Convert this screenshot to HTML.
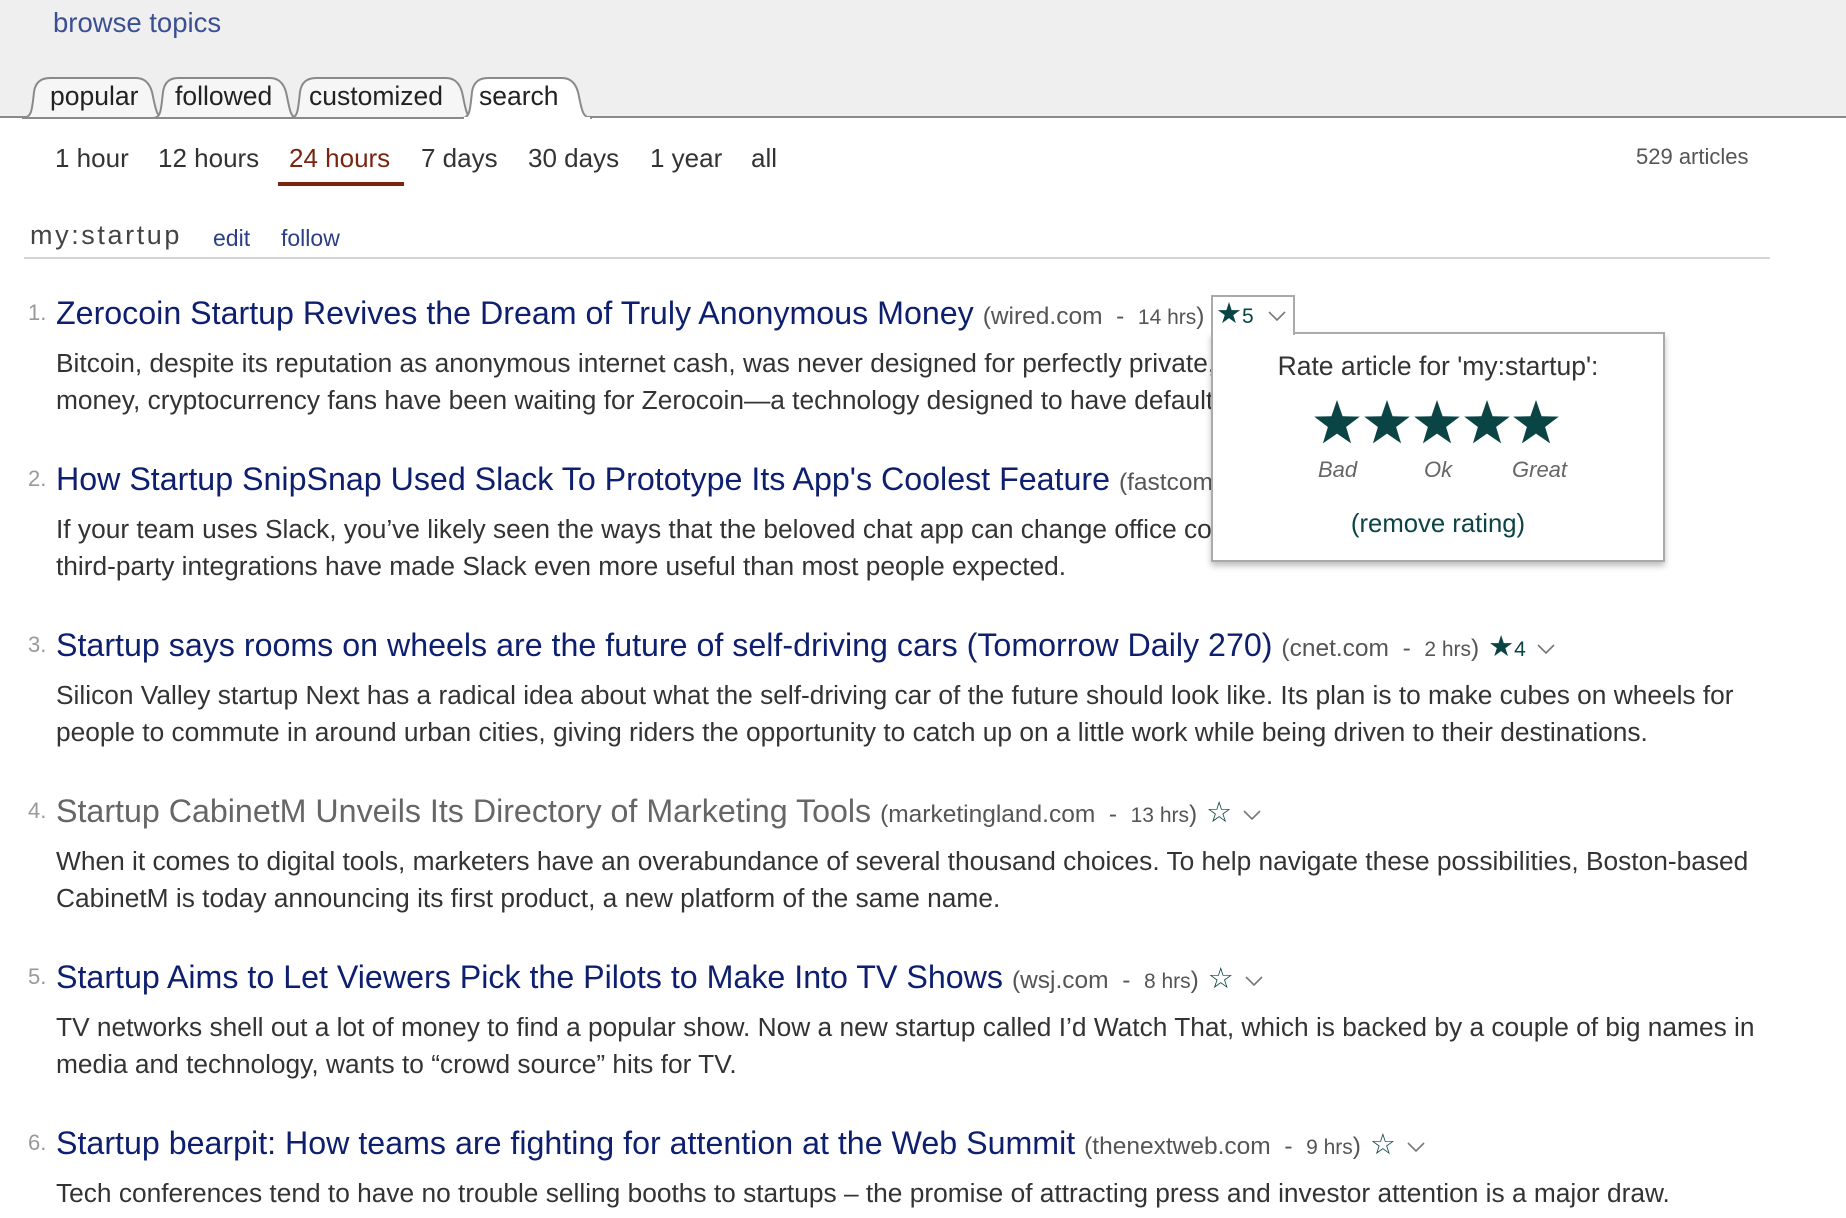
<!DOCTYPE html>
<html><head><meta charset="utf-8"><style>
html,body{margin:0;padding:0}
body{width:1846px;height:1218px;position:relative;overflow:hidden;background:#fff;font-family:"Liberation Sans",Arial,sans-serif;color:#333}
.top{position:absolute;left:0;top:0;width:1846px;height:118px;background:#efefef;border-bottom:2px solid #8a8a8a;box-sizing:border-box}
.a{position:absolute;white-space:nowrap}
.tf{font-size:26px;color:#333;top:143px}
.item{position:absolute;left:0;width:1846px}
.num{position:absolute;left:28px;top:5px;font-size:22px;color:#999}
.ttl{position:absolute;left:56px;top:0;white-space:nowrap;font-size:32.2px;line-height:36px;color:#0d1f6e}
.ttl.v{color:#666}
.meta{font-size:24.5px;color:#555}
.meta small{font-size:21px}
.st{color:#0b4444;font-size:29px}
.rn{color:#0b4444;font-size:21px}
.body{position:absolute;left:56px;top:50px;font-size:26.3px;line-height:36.5px;color:#333;white-space:nowrap}
</style></head><body>
<div class="top"></div>
<div class="a" style="left:53px;top:7px;font-size:27.5px;color:#3b4f93">browse topics</div>
<svg class="a" style="left:0;top:70px" width="620" height="50">
<g stroke="#8a8a8a" stroke-width="2">
<path d="M22,48 C32,48 32,40 34,22 Q36,8 50,8 L136,8 Q148,8 152,22 C156,40 156,48 166,48 Z" fill="#f6f6f6"/>
<path d="M153,48 C161,48 161,40 163,22 Q165,8 178,8 L270,8 Q282,8 286,22 C290,40 290,48 298,48 Z" fill="#f6f6f6"/>
<path d="M290,48 C298,48 298,40 300,22 Q302,8 316,8 L446,8 Q458,8 462,22 C466,40 466,48 474,48 Z" fill="#f6f6f6"/>
<path d="M462,48 C470,48 470,40 472,22 Q474,8 488,8 L562,8 Q574,8 578,22 C582,40 582,48 592,48" fill="#fff"/>
</g>
<rect x="464" y="47" width="126" height="4" fill="#fff"/>
</svg>
<div class="a" style="left:50px;top:81px;font-size:26.5px;color:#222">popular</div>
<div class="a" style="left:175px;top:81px;font-size:26.5px;color:#222">followed</div>
<div class="a" style="left:309px;top:81px;font-size:26.5px;color:#222">customized</div>
<div class="a" style="left:479px;top:81px;font-size:26.5px;color:#222">search</div>

<div class="a tf" style="left:55px">1 hour</div>
<div class="a tf" style="left:158px">12 hours</div>
<div class="a tf" style="left:289px;color:#7a2510">24 hours</div>
<div class="a" style="left:278px;top:182px;width:126px;height:4px;background:#7a2510"></div>
<div class="a tf" style="left:421px">7 days</div>
<div class="a tf" style="left:528px">30 days</div>
<div class="a tf" style="left:650px">1 year</div>
<div class="a tf" style="left:751px">all</div>
<div class="a" style="left:1636px;top:144px;font-size:22px;color:#555">529 articles</div>

<div class="a" style="left:30px;top:220px;font-size:27px;color:#444;letter-spacing:2.6px">my:startup</div>
<div class="a" style="left:213px;top:225px;font-size:23px;color:#2b3f85">edit</div>
<div class="a" style="left:281px;top:225px;font-size:23px;color:#2b3f85">follow</div>
<div class="a" style="left:24px;top:257px;width:1746px;height:2px;background:#d4d4d4"></div>

<div class="item" style="top:295px">
<div class="num">1.</div>
<div class="ttl">Zerocoin Startup Revives the Dream of Truly Anonymous Money <span class="meta">(wired.com &nbsp;- &nbsp;<small>14 hrs</small>)</span></div>
<div class="body">Bitcoin, despite its reputation as anonymous internet cash, was never designed for perfectly private, untraceable<br>money, cryptocurrency fans have been waiting for Zerocoin—a technology designed to have default anonymity.</div>
</div>
<div class="item" style="top:461px">
<div class="num">2.</div>
<div class="ttl">How Startup SnipSnap Used Slack To Prototype Its App's Coolest Feature <span class="meta">(fastcompany.com &nbsp;- &nbsp;<small>8 hrs</small>)</span></div>
<div class="body">If your team uses Slack, you’ve likely seen the ways that the beloved chat app can change office communication. Its bots and<br>third-party integrations have made Slack even more useful than most people expected.</div>
</div>
<div class="item" style="top:627px">
<div class="num">3.</div>
<div class="ttl">Startup says rooms on wheels are the future of self-driving cars (Tomorrow Daily 270) <span class="meta">(cnet.com &nbsp;- &nbsp;<small>2 hrs</small>)</span> <span class="st">★</span><span class="rn">4</span> <svg width="22" height="14" viewBox="0 0 22 14"><path d="M3,3 L11,11 L19,3" fill="none" stroke="#777" stroke-width="1.6"/></svg></div>
<div class="body">Silicon Valley startup Next has a radical idea about what the self-driving car of the future should look like. Its plan is to make cubes on wheels for<br>people to commute in around urban cities, giving riders the opportunity to catch up on a little work while being driven to their destinations.</div>
</div>
<div class="item" style="top:793px">
<div class="num">4.</div>
<div class="ttl v">Startup CabinetM Unveils Its Directory of Marketing Tools <span class="meta">(marketingland.com &nbsp;- &nbsp;<small>13 hrs</small>)</span> <span class="st">☆</span> <svg width="22" height="14" viewBox="0 0 22 14"><path d="M3,3 L11,11 L19,3" fill="none" stroke="#777" stroke-width="1.6"/></svg></div>
<div class="body">When it comes to digital tools, marketers have an overabundance of several thousand choices. To help navigate these possibilities, Boston-based<br>CabinetM is today announcing its first product, a new platform of the same name.</div>
</div>
<div class="item" style="top:959px">
<div class="num">5.</div>
<div class="ttl">Startup Aims to Let Viewers Pick the Pilots to Make Into TV Shows <span class="meta">(wsj.com &nbsp;- &nbsp;<small>8 hrs</small>)</span> <span class="st">☆</span> <svg width="22" height="14" viewBox="0 0 22 14"><path d="M3,3 L11,11 L19,3" fill="none" stroke="#777" stroke-width="1.6"/></svg></div>
<div class="body">TV networks shell out a lot of money to find a popular show. Now a new startup called I’d Watch That, which is backed by a couple of big names in<br>media and technology, wants to “crowd source” hits for TV.</div>
</div>
<div class="item" style="top:1125px">
<div class="num">6.</div>
<div class="ttl">Startup bearpit: How teams are fighting for attention at the Web Summit <span class="meta">(thenextweb.com &nbsp;- &nbsp;<small>9 hrs</small>)</span> <span class="st">☆</span> <svg width="22" height="14" viewBox="0 0 22 14"><path d="M3,3 L11,11 L19,3" fill="none" stroke="#777" stroke-width="1.6"/></svg></div>
<div class="body">Tech conferences tend to have no trouble selling booths to startups – the promise of attracting press and investor attention is a major draw.</div>
</div>

<!-- rating popup -->
<div class="a" style="left:1211px;top:332px;width:454px;height:230px;background:#fff;border:2px solid #aaa;box-sizing:border-box;box-shadow:0 4px 6px rgba(0,0,0,0.25)"></div>
<div class="a" style="left:1211px;top:295px;width:84px;height:40px;background:#fff;border:2px solid #aaa;border-bottom:none;box-sizing:border-box"></div>
<div class="a" style="left:1216px;top:296px;font-size:29px;color:#0b4444">★<span style="font-size:21px">5</span></div>
<svg class="a" style="left:1266px;top:309px" width="22" height="14" viewBox="0 0 22 14"><path d="M3,3 L11,11 L19,3" fill="none" stroke="#777" stroke-width="1.6"/></svg>
<div class="a" style="left:1211px;top:351px;width:454px;text-align:center;font-size:26.5px;color:#333">Rate article for 'my:startup':</div>
<svg class="a" style="left:1300px;top:396px" width="280" height="56">
<defs><polygon id="s" points="0,-24 5.6,-7.7 22.8,-7.4 9.1,3 14.1,19.4 0,9.6 -14.1,19.4 -9.1,3 -22.8,-7.4 -5.6,-7.7" fill="#0b4444"/></defs>
<use href="#s" x="37" y="28"/><use href="#s" x="87" y="28"/><use href="#s" x="137" y="28"/><use href="#s" x="187" y="28"/><use href="#s" x="236" y="28"/>
</svg>
<div class="a" style="left:1318px;top:457px;font-size:22px;color:#666;font-style:italic">Bad</div>
<div class="a" style="left:1424px;top:457px;font-size:22px;color:#666;font-style:italic">Ok</div>
<div class="a" style="left:1512px;top:457px;font-size:22px;color:#666;font-style:italic">Great</div>
<div class="a" style="left:1211px;top:510px;width:454px;text-align:center;font-size:25.7px;color:#0b4444">(remove rating)</div>
</body></html>
